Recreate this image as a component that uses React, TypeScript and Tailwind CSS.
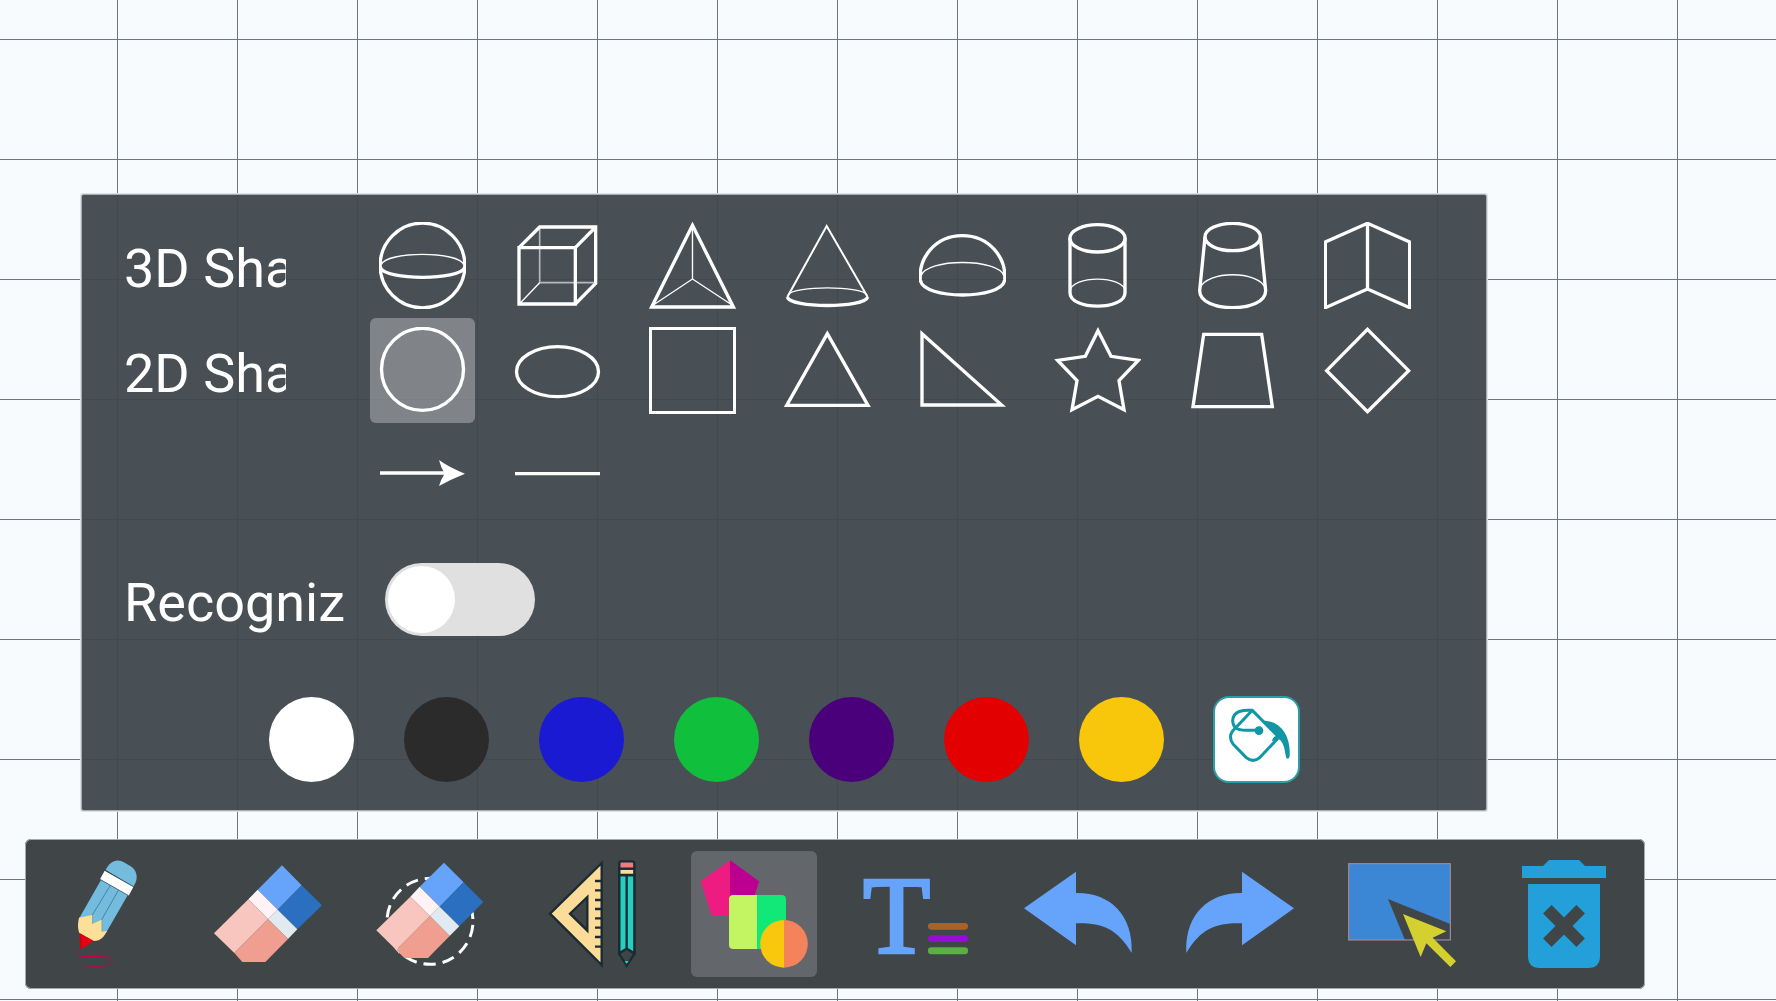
import { ReactNode, useState } from "react";

type Item = {
  name: string;
  box: string;
  art: ReactNode;
};

const solidShapes: Item[] = [
  {
    name: "Sphere",
    box: "0 0 261 261",
    art: (
      <>
        <circle cx="130.5" cy="130.5" r="127" />
        <path d="M7 128C20 87 241 87 254 128" strokeWidth="4" />
        <path d="M4 137C20 176 241 176 257 137" />
      </>
    ),
  },
  {
    name: "Cube",
    box: "0 0 261 261",
    art: (
      <>
        <path d="M77 16V182H245" strokeWidth="5" opacity="0.6" />
        <path d="M77 182L16 246" strokeWidth="4" />
        <path d="M15 77H184V246H15ZM15 77L77 15H245V184L184 246M184 77L245 15" />
      </>
    ),
  },
  {
    name: "Pyramid",
    box: "147 66 261 261",
    art: (
      <>
        <path d="M277.500 74V237L160 315M277.500 237L396 315" strokeWidth="4" />
        <path d="M277.500 76L155 321H400Z" />
      </>
    ),
  },
  {
    name: "Cone",
    box: "552 66 261 261",
    art: (
      <>
        <path d="M564 284C584 257 781 257 801 284" strokeWidth="4" />
        <path d="M562 291L680 78L803 291" strokeWidth="6" />
        <path d="M562 291C570 325 794 325 803 291" />
      </>
    ),
  },
  {
    name: "Hemisphere",
    box: "957 66 261 261",
    art: (
      <>
        <path d="M963 228C978 174 1197 174 1212 228" strokeWidth="4" />
        <path d="M961 240C955 175 1005 107 1087 107S1220 175 1214 240C1207 300 968 300 961 240Z" />
      </>
    ),
  },
  {
    name: "Cylinder",
    box: "102 66 261 261",
    art: (
      <>
        <path d="M150 274C155 225 310 225 316 274" strokeWidth="4" />
        <ellipse cx="232.500" cy="115" rx="83" ry="41" />
        <path d="M150 115V278C150 332 315 332 315 278V115" />
      </>
    ),
  },
  {
    name: "Frustum",
    box: "507 66 261 261",
    art: (
      <>
        <path d="M540 264C561 211 715 211 736 264" strokeWidth="4" />
        <ellipse cx="638" cy="111" rx="83" ry="41" />
        <path d="M555 111L539 272C539 340 737 340 737 272L721 111" />
      </>
    ),
  },
  {
    name: "Open book",
    box: "912 66 261 261",
    art: <path d="M1042.500 70L916 126V323L1042.500 267L1169 323V126ZM1042.500 70V267" />,
  },
];

const flatShapes: Item[] = [
  {
    name: "Circle",
    box: "0 0 261 261",
    art: <circle cx="130.5" cy="127" r="123" />,
  },
  {
    name: "Ellipse",
    box: "0 0 261 261",
    art: <ellipse cx="130.5" cy="134" rx="123" ry="75" />,
  },
  {
    name: "Square",
    box: "147 381 261 261",
    art: <rect x="151" y="385" width="253" height="253" />,
  },
  {
    name: "Triangle",
    box: "552 381 261 261",
    art: <path d="M682 401L560 616H804Z" />,
  },
  {
    name: "Right triangle",
    box: "957 381 261 261",
    art: <path d="M966 401V615H1205Z" />,
  },
  {
    name: "Star",
    box: "102 381 261 261",
    art: (
      <path d="M234 392L273 469L355 481L297 542L312 629L234 589L156 629L171 542L113 481L196 469Z" />
    ),
  },
  {
    name: "Trapezoid",
    box: "507 381 261 261",
    art: <path d="M551 403H725L757 620H519Z" />,
  },
  {
    name: "Diamond",
    box: "912 381 261 261",
    art: <path d="M1042.500 388L1166 512L1042.500 635L920 512Z" />,
  },
];

const lineShapes: Item[] = [
  {
    name: "Arrow",
    box: "0 0 261 261",
    art: (
      <>
        <path d="M3 123H200" />
        <path d="M258 125Q212 107 180 84Q185 105 197 125Q185 143 180 162Q215 142 258 125Z" fill="white" stroke="none" />
      </>
    ),
  },
  {
    name: "Line",
    box: "0 0 261 261",
    art: <path d="M3 125H258" />,
  },
];

const colors = [
  { name: "White", className: "bg-white" },
  { name: "Black", className: "bg-[#2b2b2b]" },
  { name: "Blue", className: "bg-[#191ad1]" },
  { name: "Green", className: "bg-[#10bf3c]" },
  { name: "Purple", className: "bg-[#4b007b]" },
  { name: "Red", className: "bg-[#e30000]" },
  { name: "Yellow", className: "bg-[#f8c60b]" },
];

const tools: Item[] = [
  {
    name: "Pen",
    box: "156 120 324 324",
    art: (
      <>
        <path d="M238 294L303 180L383 226L320 335L300 348Z" fill="#74bcde" />
        <path d="M317 150C330 124 350 114 374 128L391 138C409 150 414 168 407 187L400 201Z" fill="#74bcde" />
        <path d="M314 152L400 201L386 227L300 178Z" fill="#fff" />
        <path d="M316 151L401 200M300 178L386 227" stroke="#2c4450" strokeWidth="2" />
        <path d="M331 196L277 285V312M355 211L305 299V334" fill="none" stroke="#35647a" strokeWidth="2" />
        <path d="M237 293L277 285V312L305 299V335L321 333C313 349 303 363 281 363L238 339C232 323 234 306 237 293Z" fill="#fce098" />
        <path d="M238 339L281 363L248 385Q240 389 240 378Z" fill="#e80013" />
        <path d="M243 342V385" stroke="#a80018" strokeWidth="2" />
        <path d="M237 389C225 408 239 411 258 410C288 407 325 405 336 421C337 431 318 437 301 440Q272 442 253 441" fill="none" stroke="#9c1544" strokeWidth="3" />
        <path d="M247 410Q280 407 308 411M268 441Q285 443 298 439" fill="none" stroke="#c10645" strokeWidth="4" />
      </>
    ),
  },
  {
    name: "Eraser",
    box: "642 120 324 324",
    art: (
      <>
        <path d="M846 136L905 196L833 269L773 209Z" fill="#66a3fa" />
        <path d="M905 196L966 256L892 328L833 269Z" fill="#2b6fc0" />
        <path d="M773 209L833 269L804 298L745 238Z" fill="#fff3f5" />
        <path d="M833 269L892 328L864 357L804 298Z" fill="#e1eaf0" />
        <path d="M745 238L804 298L703 399L642 340Z" fill="#f9c6bf" />
        <path d="M804 298L864 357L796 426H727L703 399Z" fill="#f09e8f" />
      </>
    ),
  },
  {
    name: "Area eraser",
    box: "108 120 324 324",
    art: (
      <>
        <circle cx="270" cy="304" r="129" fill="none" stroke="#fff" strokeWidth="9" strokeDasharray="37 21" strokeDashoffset="-11" />
        <path d="M312 128L371 187L299 260L239 200Z" fill="#66a3fa" />
        <path d="M371 187L430 246L358 319L299 260Z" fill="#2b6fc0" />
        <path d="M239 200L299 260L270 289L211 230Z" fill="#fff3f5" />
        <path d="M299 260L358 319L329 348L270 289Z" fill="#e1eaf0" />
        <path d="M211 230L270 289L169 390L109 331Z" fill="#f9c6bf" />
        <path d="M270 289L329 348L264 414H193L169 390Z" fill="#f09e8f" />
      </>
    ),
  },
  {
    name: "Geometry",
    box: "594 120 324 324",
    art: (
      <g stroke="#192b33" strokeWidth="7">
        <path d="M785 129L630 281L785 435Z" fill="#fddc9a" />
        <path d="M742 231L690 281L742 332Z" fill="#404548" />
        <path
          d="M765 183H785M765 211H785M765 240H785M765 267H785M765 295H785M765 323H785M765 351H785M765 380H785"
          fill="none"
        />
        <path d="M838 165V402L860 437L883 402V165" fill="#404548" />
        <path d="M838 165H883V400L860 386L838 400Z" fill="#24cfc0" />
        <path d="M860 165V386" />
        <path d="M838 146H883V165H838Z" fill="#fddc9a" />
        <path d="M838 146V130Q838 124 845 124H876Q883 124 883 130V146Z" fill="#f17a7a" />
        <path d="M854 423H866L860 432Z" fill="#24cfc0" stroke="none" />
      </g>
    ),
  },
  {
    name: "Shapes",
    box: "90 120 324 324",
    art: (
      <>
        <path d="M180 121L92 184L125 288H180Z" fill="#ee1b80" />
        <path d="M180 121L267 184L235 288H180Z" fill="#bb0091" />
        <path d="M261 225H190Q177 225 177 238V374Q177 387 190 387H261Z" fill="#c3f562" />
        <path d="M261 225H335Q348 225 348 238V374Q348 387 335 387H261Z" fill="#11e877" />
        <path d="M342 300A71.500 71.500 0 0 0 342 443Z" fill="#f9c70b" />
        <path d="M342 300A71.500 71.500 0 0 1 342 443Z" fill="#f4835b" />
      </>
    ),
  },
  {
    name: "Text",
    box: "576 120 324 324",
    art: (
      <>
        <text
          x="680"
          y="398"
          textAnchor="middle"
          fill="#66a3fa"
          stroke="#66a3fa"
          strokeWidth="10"
          className="font-['Liberation_Serif',serif] text-[328px]">
          T
        </text>
        <rect x="774" y="309" width="120" height="20" rx="10" fill="#a96329" />
        <rect x="774" y="346" width="120" height="20" rx="10" fill="#970dd5" />
        <rect x="774" y="382" width="120" height="21" rx="10" fill="#5bb043" />
      </>
    ),
  },
  {
    name: "Undo",
    box: "72 120 324 324",
    art: <path d="M72 265L228 155V219C330 217 400 285 395 399C350 322 300 308 228 310V376Z" fill="#66a3fa" />,
  },
  {
    name: "Redo",
    box: "558 120 324 324",
    art: <path d="M882 265L726 155V219C624 217 554 285 559 399C604 322 654 308 726 310V376Z" fill="#66a3fa" />,
  },
  {
    name: "Select",
    box: "84 120 324 324",
    art: (
      <>
        <rect x="86" y="131" width="305" height="229" fill="#3b87d6" stroke="#b98a92" strokeWidth="3" />
        <path d="M204 237L389 311V358H254Z" fill="#404548" />
        <path d="M249 282L379 334L338 353L408 424L391 441L319 370L302 411Z" fill="#d4d02f" />
      </>
    ),
  },
  {
    name: "Delete",
    box: "570 120 324 324",
    art: (
      <>
        <path d="M606 138H669L687 120H777L795 138H858V174H606Z" fill="#239fd9" />
        <path d="M624 192H840V409Q840 444 805 444H659Q624 444 624 409Z" fill="#239fd9" />
        <path d="M682 268L782 368M782 268L682 368" stroke="#404548" strokeWidth="36" />
      </>
    ),
  },
];

const ShapeRow = ({
  items,
  selected,
  onSelect,
}: {
  items: Item[];
  selected: string;
  onSelect: (name: string) => void;
}) => (
  <div className="flex gap-[30px]">
    {items.map(({ name, box, art }) => (
      <button
        key={name}
        aria-label={name}
        aria-pressed={selected === name}
        onClick={() => onSelect(name)}
        className="w-[105px] shrink-0 rounded-md p-[9px] aria-pressed:bg-white/30">
        <svg
          viewBox={box}
          fill="none"
          stroke="white"
          strokeWidth="10"
          strokeMiterlimit="10"
          className="block w-full">
          {art}
        </svg>
      </button>
    ))}
  </div>
);

const Label = ({ children }: { children: ReactNode }) => (
  <h2 className="w-[162px] shrink-0 overflow-hidden whitespace-nowrap pt-[6px] leading-[72px]">
    {children}
  </h2>
);

const App = () => {
  const [shape, setShape] = useState("Circle");
  const [tool, setTool] = useState("Shapes");
  const [recognize, setRecognize] = useState(false);

  return (
    <main className="flex min-h-screen flex-col justify-end gap-7 bg-[#f7fbfe] bg-[linear-gradient(to_right,#70757b_1px,transparent_1px),linear-gradient(to_bottom,#70757b_1px,transparent_1px)] bg-[size:120px_120px] bg-[position:117px_39px] pb-3 font-[Roboto,sans-serif]">
      <section className="ml-[81px] mr-[289px] rounded-xs border border-[#a9adb0] bg-[#3f474c]/95 bg-clip-padding py-[18px] pl-[42px] text-[54px] text-white ring-1 ring-[#dde1e4]">
        <div className="flex items-center gap-[84px]">
          <Label>3D Sha</Label>
          <ShapeRow items={solidShapes} selected={shape} onSelect={setShape} />
        </div>
        <div className="flex items-center gap-[84px]">
          <Label>2D Sha</Label>
          <ShapeRow items={flatShapes} selected={shape} onSelect={setShape} />
        </div>
        <div className="pl-[246px]">
          <ShapeRow items={lineShapes} selected={shape} onSelect={setShape} />
        </div>

        <div className="mt-[35px] flex h-[73px] items-center">
          <label htmlFor="recognize" className="w-[261px] shrink-0 pt-[6px] leading-[72px]">
            Recogniz
          </label>
          <input
            id="recognize"
            type="checkbox"
            role="switch"
            checked={recognize}
            onChange={(e) => setRecognize(e.target.checked)}
            className="h-[73px] w-[150px] appearance-none rounded-full bg-[#e0e0e0] p-[3px] before:block before:size-[67px] before:rounded-full before:bg-white checked:bg-sky-500 checked:before:ml-auto"
          />
        </div>

        <div className="mt-[51px] flex h-[105px] items-center gap-12 pl-36">
          {colors.map(({ name, className }) => (
            <button key={name} aria-label={name} className="size-[87px] shrink-0 p-px">
              <span className={`block size-full rounded-full ${className}`} />
            </button>
          ))}
          <button
            aria-label="Fill"
            className="size-[87px] shrink-0 rounded-2xl border-2 border-[#2b9ea6] bg-white">
            <svg viewBox="104 84 249 249" fill="none" stroke="#1096a5" strokeWidth="9" className="block w-full">
              <path d="M216 121L156 184Q144 202 158 222L197 262Q218 280 239 262L291 207V197Z" strokeLinejoin="round" />
              <path d="M216 121C190 119 158 122 157 152C158 178 172 184 236 180" />
              <circle cx="236" cy="182" r="13" fill="#1096a5" stroke="none" />
              <path
                d="M248 152C300 152 332 196 328 258Q326 270 318 264C313 246 313 218 295 207L275 214Q275 202 290 196Z"
                fill="#1096a5"
                stroke="none"
              />
            </svg>
          </button>
        </div>
      </section>

      <nav className="ml-[25px] mr-[131px] flex rounded-md bg-[#404548] py-3 ring-1 ring-[#a6aaad] ring-inset">
        {tools.map(({ name, box, art }) => (
          <div key={name} className="flex flex-1 justify-center">
            <button
              aria-label={name}
              aria-pressed={tool === name}
              onClick={() => setTool(name)}
              className="w-[126px] rounded-md p-[9px] aria-pressed:bg-[#63666a]">
              <svg viewBox={box} className="block w-full overflow-visible">
                {art}
              </svg>
            </button>
          </div>
        ))}
      </nav>
    </main>
  );
};

export default App;
